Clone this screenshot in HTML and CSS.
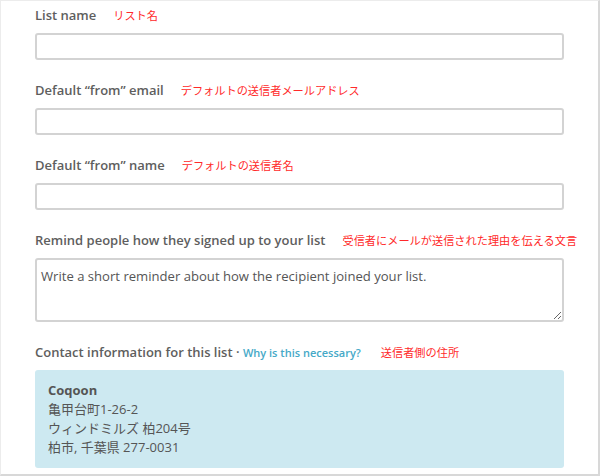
FILE: index.html
```html
<!DOCTYPE html>
<html lang="ja">
<head>
<meta charset="utf-8">
<link rel="stylesheet" href="styles.css">
</head>
<body>
<div class="frame">
  <form class="form">
    <div class="field">
      <div class="label-row"><span class="label">List name</span><span class="note">リスト名</span></div>
      <input class="input" type="text">
    </div>
    <div class="field">
      <div class="label-row"><span class="label">Default “from” email</span><span class="note">デフォルトの送信者メールアドレス</span></div>
      <input class="input" type="text">
    </div>
    <div class="field">
      <div class="label-row"><span class="label">Default “from” name</span><span class="note">デフォルトの送信者名</span></div>
      <input class="input" type="text">
    </div>
    <div class="field">
      <div class="label-row"><span class="label">Remind people how they signed up to your list</span><span class="note">受信者にメールが送信された理由を伝える文言</span></div>
      <textarea class="textarea">Write a short reminder about how the recipient joined your list.</textarea>
    </div>
    <div class="field">
      <div class="label-row"><span class="label">Contact information for this list · <a class="link" href="#">Why is this necessary?</a></span><span class="note note-wide">送信者側の住所</span></div>
      <div class="address">
        <div class="company">Coqoon</div>
        <div>亀甲台町1-26-2</div>
        <div>ウィンドミルズ 柏204号</div>
        <div>柏市, 千葉県 277-0031</div>
      </div>
    </div>
  </form>
</div>
</body>
</html>
```
FILE: styles.css
```css
html, body {
  margin: 0;
  padding: 0;
  background: #ffffff;
}
.frame {
  box-sizing: border-box;
  width: 600px;
  height: 476px;
  border-top: 1px solid #ececec;
  border-left: 1px solid #ececec;
  border-right: 2px solid #d8d8d8;
  border-bottom: 2px solid #d8d8d8;
  overflow: hidden;
  font-family: "Open Sans", "Noto Sans CJK JP", sans-serif;
  color: #555555;
}
.form {
  padding: 4px 0 0 34px;
  width: 529px;
}
.field {
  margin-bottom: 20px;
}
.label-row {
  display: flex;
  align-items: center;
  height: 20px;
  margin-bottom: 8px;
}
.label {
  font-size: 13px;
  font-weight: 600;
  color: #5e5e5e;
  white-space: nowrap;
}
.note {
  margin-left: 17px;
  font-family: "Noto Sans CJK JP", sans-serif;
  font-size: 11.2px;
  color: #ff2a2a;
  white-space: nowrap;
}
.note-wide {
  margin-left: 20px;
}
.link {
  font-size: 11px;
  font-weight: 600;
  color: #45a9c7;
  text-decoration: none;
}
.input {
  display: block;
  box-sizing: border-box;
  width: 529px;
  height: 27px;
  margin: 0;
  border: 2px solid #d3d3d3;
  border-radius: 3px;
  background: #fff;
}
.textarea {
  display: block;
  box-sizing: border-box;
  width: 529px;
  height: 64px;
  margin: 0;
  padding: 6px 4px;
  border: 2px solid #d3d3d3;
  border-radius: 3px;
  font-family: "Open Sans", sans-serif;
  font-size: 13.1px;
  line-height: 20px;
  color: #555;
  resize: vertical;
}
.address {
  box-sizing: border-box;
  height: 98px;
  padding: 11px 13px;
  background: #cde9f1;
  border-radius: 3px;
  font-family: "Open Sans", "Noto Sans CJK JP", sans-serif;
  font-size: 13px;
  line-height: 19px;
  color: #555;
}
.company {
  font-weight: 700;
}
```
